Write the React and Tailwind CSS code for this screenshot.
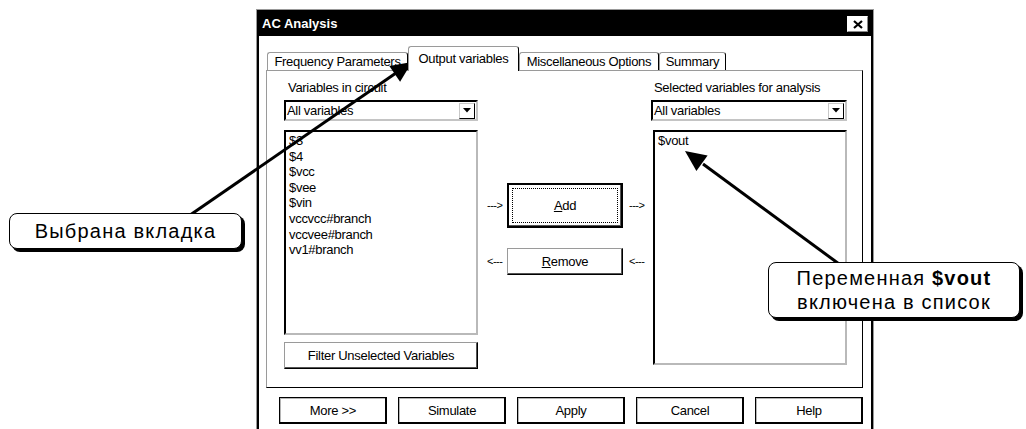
import React from 'react';

const sans = "font-['Liberation_Sans',Arial,sans-serif]";

const DropDown = () => (
  <div className="h-[21px] flex items-center border-2 border-t-black border-l-black border-b-[#c4c4c4] border-r-[#c4c4c4] bg-white">
    <span className="flex-1 pl-[1px] text-[13px] tracking-[-0.3px] leading-none">All variables</span>
    <div className="w-[16px] h-[16px] mr-[1px] flex items-center justify-center border border-t-[#c8c8c8] border-l-[#c8c8c8] border-b-black border-r-black">
      <svg width="8" height="5" viewBox="0 0 8 5"><path d="M0 0h8L4 4.5z" fill="#000" /></svg>
    </div>
  </div>
);

const ListBox = ({ items, height }) => (
  <div
    className={`mt-[9px] border-2 border-t-black border-l-black border-b-[#b9b9b9] border-r-[#b9b9b9] bg-white pl-[3px] pt-[1px] ${height}`}
  >
    {items.map((it) => (
      <div key={it} className="text-[13px] tracking-[-0.3px] leading-[15.6px]">{it}</div>
    ))}
  </div>
);

const Tab = ({ label, w, active }) => (
  <div
    className={`${w} flex items-center justify-center rounded-t-[3px] border-t border-l border-[#9a9a9a] border-r border-r-black bg-white text-[13px] tracking-[-0.3px] ${
      active ? 'h-[25px] -mb-px relative z-10 pb-[1px]' : 'h-[18px] pt-[1px]'
    }`}
  >
    {label}
  </div>
);

const BottomButton = ({ label }) => (
  <div className="w-[108px] h-[27px] flex items-center justify-center border border-black shadow-[inset_-1px_-1px_0_#000,inset_1px_1px_0_#b5b5b5] text-[13px] tracking-[-0.3px]">
    {label}
  </div>
);

export default function App() {
  const left = ['$3', '$4', '$vcc', '$vee', '$vin', 'vccvcc#branch', 'vccvee#branch', 'vv1#branch'];

  return (
    <div className={`relative w-[1026px] h-[429px] overflow-hidden bg-white text-black ${sans}`}>
      {/* dialog */}
      <div className="ml-[256px] mt-[9px] w-[618px] h-[440px] border border-[#999]">
        <div className="h-full border-2 border-black">
          <div className="h-[24px] bg-black flex items-center justify-between pl-[3px] pr-[3px]">
            <span className="text-white font-bold text-[13px]">AC Analysis</span>
            <div className="w-[21px] h-[16px] bg-white flex items-center justify-center border border-t-white border-l-white border-b-[#888] border-r-[#888]">
              <svg width="10" height="9" viewBox="0 0 10 9">
                <path d="M1 1l8 7M9 1L1 8" stroke="#000" strokeWidth="2.2" />
              </svg>
            </div>
          </div>

          <div className="pl-[7px] pr-[8px]">
            {/* tabs */}
            <div className="mt-[10px] h-[24px] flex items-end pl-[1px]">
              <Tab label="Frequency Parameters" w="w-[141px]" />
              <Tab label="Output variables" w="w-[111px]" active />
              <Tab label="Miscellaneous Options" w="w-[140px]" />
              <Tab label="Summary" w="w-[67px]" />
            </div>

            {/* panel */}
            <div className="h-[318px] border-t border-l border-[#9a9a9a] border-r border-b border-r-black border-b-black flex pt-[10px] pl-[17px]">
              <div className="w-[194px]">
                <div className="h-[14px] pl-[4px] text-[13px] tracking-[-0.3px] leading-[14px]">Variables in circuit</div>
                <div className="mt-[5px]"><DropDown /></div>
                <ListBox items={left} height="h-[205px]" />
                <div className="mt-[7px] h-[27px] flex items-center justify-center border border-t-[#9a9a9a] border-l-[#9a9a9a] border-b-black border-r-black shadow-[inset_-1px_-1px_0_#555] text-[13px] tracking-[-0.3px]">
                  Filter Unselected Variables
                </div>
              </div>

              <div className="w-[173px] text-[11px]">
                <div className="mt-[102px] flex items-center pl-[9px]">
                  <span className="w-[16px] tracking-[-0.5px]">---&gt;</span>
                  <div className="ml-[4px] w-[116px] h-[45px] border-2 border-black shadow-[inset_-1px_-1px_0_#555] p-[3px]">
                    <div className="h-full border border-dotted border-black flex items-center justify-center text-[13px] tracking-[-0.3px]">
                      <span><span className="underline">A</span>dd</span>
                    </div>
                  </div>
                  <span className="ml-[6px] w-[16px] tracking-[-0.5px]">---&gt;</span>
                </div>
                <div className="mt-[20px] flex items-center pl-[9px]">
                  <span className="w-[16px] tracking-[-0.5px]">&lt;---</span>
                  <div className="ml-[4px] w-[116px] h-[27px] border border-t-[#9a9a9a] border-l-[#9a9a9a] border-b-black border-r-black shadow-[inset_-1px_-1px_0_#555] flex items-center justify-center text-[13px] tracking-[-0.3px]">
                    <span><span className="underline">R</span>emove</span>
                  </div>
                  <span className="ml-[6px] w-[16px] tracking-[-0.5px]">&lt;---</span>
                </div>
              </div>

              <div className="w-[196px]">
                <div className="h-[14px] pl-[3px] text-[13px] tracking-[-0.3px] leading-[14px]">Selected variables for analysis</div>
                <div className="mt-[5px]"><DropDown /></div>
                <div className="pl-[2px]">
                  <ListBox items={['$vout']} height="h-[235px]" />
                </div>
              </div>
            </div>

            {/* bottom buttons */}
            <div className="mt-[9px] ml-[13px] flex gap-[11px]">
              <BottomButton label="More >>" />
              <BottomButton label="Simulate" />
              <BottomButton label="Apply" />
              <BottomButton label="Cancel" />
              <BottomButton label="Help" />
            </div>
          </div>
        </div>
      </div>

      {/* arrows */}
      <svg className="absolute left-0 top-0 pointer-events-none" width="1026" height="429">
        <line x1="180" y1="222" x2="396" y2="73" stroke="#000" strokeWidth="3" />
        <polygon points="412,62 400.1,81.7 389.3,66.1" fill="#000" />
        <line x1="850" y1="272" x2="703" y2="164" stroke="#000" strokeWidth="3" />
        <polygon points="685,151 707.6,155.6 696.4,171" fill="#000" />
      </svg>

      {/* callouts */}
      <div className="absolute left-[9px] top-[213px] w-[233px] h-[36px] rounded-[8px] border-[1.5px] border-black bg-white shadow-[3px_3px_0_#000] flex items-center justify-center text-[20px] tracking-[1.2px] leading-none">
        Выбрана вкладка
      </div>
      <div className="absolute left-[768px] top-[262px] w-[252px] h-[56px] rounded-[8px] border-[1.5px] border-black bg-white shadow-[3px_3px_0_#000] flex flex-col items-center justify-center text-[20px] tracking-[1.2px]">
        <div className="h-[24px] leading-[24px]">Переменная <span className="font-black">$vout</span></div>
        <div className="h-[24px] leading-[24px]">включена в список</div>
      </div>
    </div>
  );
}
